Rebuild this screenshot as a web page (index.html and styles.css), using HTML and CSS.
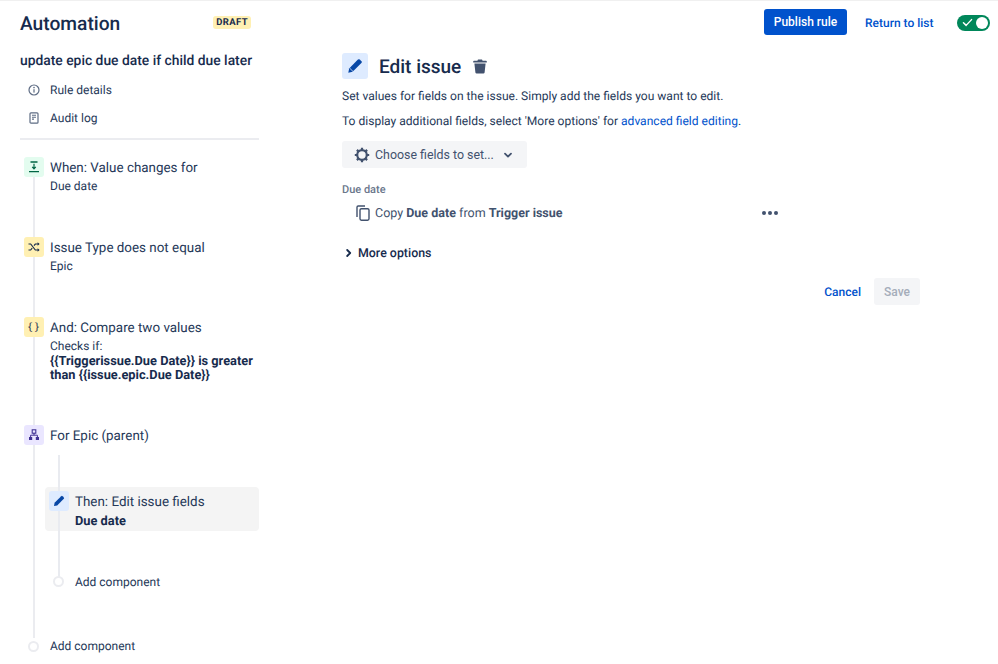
FILE: index.html
```html
<!DOCTYPE html>
<html lang="en">
<head>
    <meta charset="UTF-8">
    <meta name="viewport" content="width=device-width, initial-scale=1.0">
    <title>Automation</title>
    <link rel="stylesheet" href="styles.css">
</head>
<body>
    <header class="top-bar">
        <div class="brand">
            <h1>Automation</h1>
            <span class="lozenge">DRAFT</span>
        </div>
        <div class="top-actions">
            <button class="btn-primary">Publish rule</button>
            <a class="link return-link" href="#">Return to list</a>
            <span class="toggle">
                <svg width="11" height="9" viewBox="0 0 12 10"><path d="M1.5 5.2l3 3 6-6.4" fill="none" stroke="#fff" stroke-width="1.6" stroke-linecap="round" stroke-linejoin="round"/></svg>
                <span class="knob"></span>
            </span>
        </div>
    </header>

    <div class="layout">
        <aside class="sidebar">
            <h2 class="rule-name">update epic due date if child due later</h2>
            <ul class="side-links">
                <li>
                    <svg width="12" height="12" viewBox="0 0 12 12"><circle cx="6" cy="6" r="5" fill="none" stroke="#5e6c84" stroke-width="1.2"/><rect x="5.4" y="5.2" width="1.2" height="3.4" fill="#5e6c84"/><circle cx="6" cy="3.6" r=".8" fill="#5e6c84"/></svg>
                    Rule details
                </li>
                <li>
                    <svg width="12" height="12" viewBox="0 0 12 12"><rect x="2" y=".8" width="8" height="10.4" rx="1" fill="none" stroke="#5e6c84" stroke-width="1.2"/><path d="M4 3.3h4M4 5.2h4M4 7.1h2" stroke="#5e6c84" stroke-width="1.1"/></svg>
                    Audit log
                </li>
            </ul>

            <div class="timeline">
                <div class="step step-when">
                    <span class="step-icon icon-green">
                        <svg width="12" height="12" viewBox="0 0 12 12"><path d="M2.5 1h7M1 10.6h10" stroke="#006644" stroke-width="1.3"/><path d="M6 2.800v4.600M4.200 5.800L6 7.800l1.800-2" fill="none" stroke="#006644" stroke-width="1.200"/></svg>
                    </span>
                    <div class="step-text">
                        <div class="step-title">When: Value changes for</div>
                        <div class="step-sub">Due date</div>
                    </div>
                </div>
                <div class="step step-type">
                    <span class="step-icon icon-yellow">
                        <svg width="12" height="12" viewBox="0 0 12 12"><path d="M.5 3h2.2l4.6 6h3M.5 9h2.2l1.5-2M6 4.6L7.3 3h3" fill="none" stroke="#172b4d" stroke-width="1.2"/><path d="M9.6 1.2L11.6 3 9.6 4.8zM9.6 7.2l2 1.8-2 1.8z" fill="#172b4d"/></svg>
                    </span>
                    <div class="step-text">
                        <div class="step-title">Issue Type does not equal</div>
                        <div class="step-sub">Epic</div>
                    </div>
                </div>
                <div class="step step-compare">
                    <span class="step-icon icon-yellow icon-braces">{}</span>
                    <div class="step-text">
                        <div class="step-title">And: Compare two values</div>
                        <div class="step-sub">Checks if:</div>
                        <div class="step-strong">{{Triggerissue.Due Date}} is greater than {{issue.epic.Due Date}}</div>
                    </div>
                </div>
                <div class="step step-branch">
                    <span class="step-icon icon-purple">
                        <svg width="12" height="12" viewBox="0 0 12 12"><rect x="4.200" y=".8" width="3.600" height="3.400" fill="none" stroke="#403294" stroke-width="1.100"/><rect x="1" y="8" width="3.200" height="3" fill="#403294"/><rect x="7.800" y="8" width="3.200" height="3" fill="#403294"/><path d="M2.600 8V6.200h6.800V8M6 4v2.200" fill="none" stroke="#403294" stroke-width="1"/></svg>
                    </span>
                    <div class="step-text">
                        <div class="step-title">For Epic (parent)</div>
                    </div>
                </div>

                <div class="branch">
                    <div class="step step-active">
                        <span class="step-icon icon-blue">
                            <svg width="12" height="12" viewBox="0 0 12 12"><path d="M1 11l.6-3.200L8.200 1.200a1 1 0 0 1 1.400 0l1.200 1.200a1 1 0 0 1 0 1.400L4.200 10.400z" fill="#0747a6"/></svg>
                        </span>
                        <div class="step-text">
                            <div class="step-title">Then: Edit issue fields</div>
                            <div class="step-strong">Due date</div>
                        </div>
                    </div>
                    <div class="add-row add-inner">
                        <span class="add-dot"></span>
                        Add component
                    </div>
                </div>

                <div class="add-row add-outer">
                    <span class="add-dot"></span>
                    Add component
                </div>
            </div>
        </aside>

        <main class="panel">
            <div class="panel-head">
                <span class="panel-icon">
                    <svg width="16" height="16" viewBox="0 0 12 12"><path d="M1 11l.6-3.200L8.200 1.200a1 1 0 0 1 1.400 0l1.200 1.200a1 1 0 0 1 0 1.400L4.200 10.400z" fill="#0747a6"/><path d="M1.900 7.500l2.600 2.600" stroke="#deebff" stroke-width=".6"/></svg>
                </span>
                <h2>Edit issue</h2>
                <svg class="trash" width="14" height="15" viewBox="0 0 14 15"><path d="M5 .6h4l.6 1.200H13a.8.8 0 0 1 .8.8v.8H.2v-.8A.8.8 0 0 1 1 1.800h3.400zM1.400 4.600h11.200l-1 9a1.200 1.200 0 0 1-1.200 1H3.600a1.200 1.200 0 0 1-1.200-1z" fill="#42526e"/></svg>
            </div>
            <p class="panel-desc">Set values for fields on the issue. Simply add the fields you want to edit.</p>
            <p class="panel-desc">To display additional fields, select 'More options' for <a class="link" href="#">advanced field editing</a>.</p>

            <button class="btn-choose">
                <svg width="16" height="16" viewBox="0 0 16 16"><circle cx="8" cy="8" r="4.800" fill="none" stroke="#42526e" stroke-width="2.200"/><path d="M8 .8v2.400M8 12.800v2.400M.8 8h2.400M12.800 8h2.400M2.900 2.900l1.700 1.700M11.400 11.400l1.700 1.700M2.900 13.100l1.700-1.700M11.400 4.600l1.700-1.700" stroke="#42526e" stroke-width="2.200"/></svg>
                <span>Choose fields to set...</span>
                <svg class="chev" width="10" height="10" viewBox="0 0 10 10"><path d="M2 3.600l3 3 3-3" fill="none" stroke="#42526e" stroke-width="1.800" stroke-linecap="round" stroke-linejoin="round"/></svg>
            </button>

            <div class="field-label">Due date</div>
            <div class="field-row">
                <svg width="14" height="16" viewBox="0 0 14 16"><path d="M1 12V2.200A1.200 1.200 0 0 1 2.200 1H9" fill="none" stroke="#42526e" stroke-width="1.400"/><rect x="4" y="3.700" width="9" height="11.500" rx="1.400" fill="none" stroke="#42526e" stroke-width="1.400"/></svg>
                <span class="field-value">Copy <b>Due date</b> from <b>Trigger issue</b></span>
                <span class="dots"><i></i><i></i><i></i></span>
            </div>

            <div class="more-options">
                <svg width="8" height="10" viewBox="0 0 8 10"><path d="M2.200 2l3 3-3 3" fill="none" stroke="#172b4d" stroke-width="1.800" stroke-linecap="round" stroke-linejoin="round"/></svg>
                More options
            </div>

            <div class="form-actions">
                <a class="link cancel-link" href="#">Cancel</a>
                <button class="btn-save" disabled>Save</button>
            </div>
        </main>
    </div>
</body>
</html>
```

FILE: styles.css
```css
* {
    margin: 0;
    padding: 0;
    box-sizing: border-box;
    font-family: Roboto, 'Liberation Sans', sans-serif;
}

body {
    background-color: #ffffff;
    color: #172b4d;
    font-size: 13px;
    width: 998px;
    height: 664px;
    overflow: hidden;
    border-top: 1px solid #f0f0f0;
    text-rendering: geometricPrecision;
}

.link {
    color: #0052cc;
    text-decoration: none;
}

.top-bar {
    display: flex;
    justify-content: space-between;
    align-items: center;
    height: 43px;
    padding: 0 8px 0 20px;
}

.brand {
    display: flex;
    justify-content: space-between;
    align-items: center;
    width: 231px;
}

.brand h1 {
    font-size: 19.2px;
    font-weight: 500;
    padding-top: 2px;
}

.lozenge {
    background-color: #fff0b3;
    border-radius: 3px;
    font-size: 9.5px;
    font-weight: 700;
    letter-spacing: 0.4px;
    padding: 1px 3px;
    line-height: 11px;
}

.top-actions {
    display: flex;
    align-items: center;
}

.btn-primary {
    background-color: #0052cc;
    color: #ffffff;
    border: none;
    border-radius: 3px;
    width: 83px;
    height: 26px;
    margin-bottom: 2px;
    padding-top: 1px;
    font-size: 12px;
    font-weight: 500;
}

.return-link {
    width: 69px;
    margin-left: 18px;
    font-size: 12px;
    font-weight: 500;
    white-space: nowrap;
}

.toggle {
    display: flex;
    align-items: center;
    justify-content: space-between;
    width: 33px;
    height: 16px;
    margin-left: 23px;
    padding: 0 2px 0 5px;
    background-color: #00875a;
    border-radius: 8px;
}

.knob {
    width: 12px;
    height: 12px;
    background-color: #ffffff;
    border-radius: 50%;
}

.layout {
    display: flex;
}

.sidebar {
    width: 239px;
    margin-left: 20px;
    flex-shrink: 0;
}

.rule-name {
    font-size: 13.85px;
    font-weight: 500;
    margin-top: 9px;
    line-height: 16px;
    white-space: nowrap;
}

.side-links {
    list-style: none;
    margin-top: 7px;
    padding-bottom: 6px;
    border-bottom: 2px solid #ebecf0;
}

.side-links li {
    display: flex;
    align-items: center;
    gap: 10px;
    height: 28px;
    padding-left: 8px;
    font-size: 12px;
    color: #253858;
}

.timeline {
    position: relative;
    margin-top: 17px;
}

.timeline::before {
    content: "";
    position: absolute;
    left: 13px;
    top: 20px;
    bottom: 14px;
    width: 2px;
    background-color: #ebecf0;
}

.step {
    position: relative;
    display: flex;
    gap: 6px;
    padding-left: 4px;
}

.step-when,
.step-type {
    height: 80px;
}

.step-compare {
    height: 108px;
}

.step-branch {
    height: 62px;
}

.step-icon {
    position: relative;
    z-index: 2;
    display: flex;
    align-items: center;
    justify-content: center;
    flex-shrink: 0;
    width: 20px;
    height: 20px;
    border-radius: 3px;
}

.icon-green {
    background-color: #e3fcef;
}

.icon-yellow {
    background-color: #fff0b3;
}

.icon-purple {
    background-color: #eae6ff;
}

.icon-blue {
    background-color: #deebff;
}

.icon-braces {
    font-size: 10px;
    font-weight: 400;
    letter-spacing: 1px;
    color: #172b4d;
    font-family: 'DejaVu Sans Mono', monospace;
}

.step-text {
    padding-top: 3px;
}

.step-title {
    font-size: 13.4px;
    line-height: 18px;
    color: #253858;
}

.step-sub {
    font-size: 12px;
    line-height: 18px;
    margin-top: -1px;
    color: #253858;
}

.step-strong {
    font-size: 12.8px;
    font-weight: 700;
    line-height: 14px;
    width: 209px;
}

.branch {
    position: relative;
    margin-left: 25px;
    width: 214px;
    height: 152px;
}

.branch::before {
    content: "";
    position: absolute;
    z-index: 1;
    left: 13px;
    top: -32px;
    height: 122px;
    width: 2px;
    background-color: #e9ebf0;
}

.step-active {
    background-color: #f4f4f4;
    border-radius: 4px;
    height: 44px;
    padding: 4px;
}

.step-active .step-strong {
    margin-top: 3px;
}

.add-row {
    position: relative;
    z-index: 2;
    display: flex;
    align-items: center;
    font-size: 12px;
    color: #253858;
    height: 12px;
}

.add-dot {
    width: 11px;
    height: 11px;
    border: 2px solid #ebecf0;
    background-color: #ffffff;
    border-radius: 50%;
}

.add-inner {
    margin-top: 45px;
    gap: 11px;
    margin-left: 8px;
}

.add-inner .add-dot {
    margin-top: -2px;
}

.add-outer {
    gap: 11px;
    margin-left: 8px;
    margin-top: 1px;
}

.panel {
    margin-left: 83px;
    width: 578px;
    padding-top: 9px;
}

.panel-head {
    display: flex;
    align-items: center;
    height: 26px;
}

.panel-icon {
    display: flex;
    align-items: center;
    justify-content: center;
    width: 26px;
    height: 26px;
    background-color: #deebff;
    border-radius: 3px;
}

.panel-head h2 {
    font-size: 19px;
    font-weight: 500;
    margin-left: 11px;
}

.trash {
    margin-left: 12px;
}

.panel-desc {
    font-size: 12.06px;
    line-height: 16px;
    margin-top: 9px;
    color: #253858;
}

.btn-choose {
    display: flex;
    align-items: center;
    gap: 5px;
    width: 185px;
    height: 27px;
    margin-top: 12px;
    padding-left: 12px;
    background-color: #f4f5f7;
    border: none;
    border-radius: 3px;
    color: #42526e;
    font-size: 12.4px;
}

.chev {
    margin-left: 4px;
}

.field-label {
    font-size: 11px;
    font-weight: 500;
    color: #6b778c;
    margin-top: 15px;
    line-height: 14px;
}

.field-row {
    display: flex;
    align-items: center;
    height: 18px;
    margin-top: 7px;
    padding-left: 14px;
    color: #42526e;
    font-size: 12.5px;
}

.field-value {
    margin-left: 5px;
}

.dots {
    display: flex;
    gap: 2px;
    margin-left: auto;
    margin-right: 142px;
}

.dots i {
    display: block;
    width: 4px;
    height: 4px;
    border-radius: 50%;
    background-color: #42526e;
}

.more-options {
    display: flex;
    align-items: center;
    gap: 5px;
    margin-top: 22px;
    padding-left: 3px;
    font-size: 12.4px;
    font-weight: 500;
    height: 18px;
}

.form-actions {
    display: flex;
    justify-content: flex-end;
    align-items: center;
    gap: 13px;
    margin-top: 16px;
}

.cancel-link {
    font-size: 12px;
    font-weight: 500;
}

.btn-save {
    width: 46px;
    height: 27px;
    background-color: #f4f5f7;
    color: #a5adba;
    border: none;
    border-radius: 3px;
    font-size: 12px;
    font-weight: 500;
}
```
